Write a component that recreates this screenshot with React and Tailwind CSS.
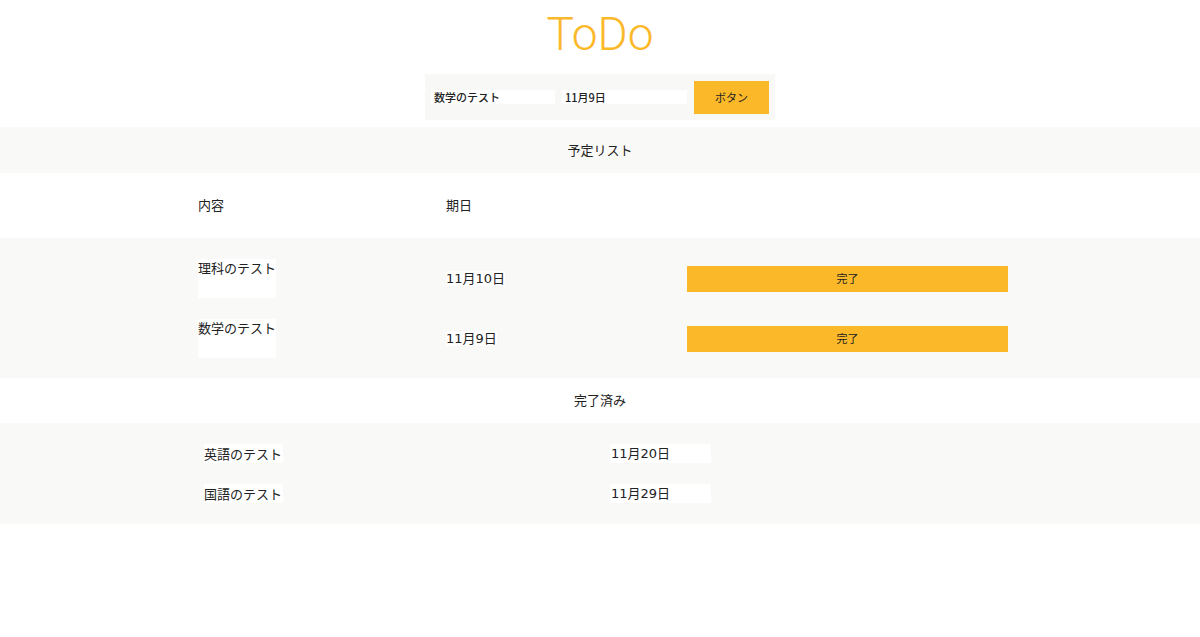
import React, { useState } from "react";

const jp = { fontFamily: '"Noto Sans CJK JP", "Noto Sans", sans-serif' };
// 日付は数字幅が広めのフォントで
const dateFont = { fontFamily: '"DejaVu Sans", "Noto Sans CJK JP", sans-serif' };

const App = () => {
  const [title, setTitle] = useState("数学のテスト");
  const [date, setDate] = useState("11月9日");
  const [todos] = useState([
    { id: 1, title: "理科のテスト", date: "11月10日" },
    { id: 2, title: "数学のテスト", date: "11月9日" },
  ]);
  const [done] = useState([
    { id: 3, title: "英語のテスト", date: "11月20日" },
    { id: 4, title: "国語のテスト", date: "11月29日" },
  ]);

  return (
    <div className="w-[1200px] h-[637px] bg-white text-[#222]" style={jp}>
      <h1
        className="h-[74px] pt-[10px] text-center text-[46px] leading-[48px] font-light text-[#fbb829]"
        style={{ fontFamily: 'Roboto, "Liberation Sans", sans-serif' }}
      >
        ToDo
      </h1>

      {/* 入力フォーム */}
      <div className="flex justify-center">
        <div className="w-[350px] h-[46px] bg-[#f8f8f6] flex items-center pl-[6px] pr-[6px]">
          <input
            value={title}
            onChange={(e) => setTitle(e.target.value)}
            className="w-[124px] h-[14px] bg-white px-[3px] text-[11px] font-medium outline-none"
          />
          <input
            value={date}
            onChange={(e) => setDate(e.target.value)}
            className="ml-[7px] w-[125px] h-[14px] bg-white px-[3px] text-[11px] font-medium outline-none"
          />
          <button
            type="button"
            className="ml-[7px] w-[75px] h-[33px] bg-[#fbb829] text-[11px]"
          >
            ボタン
          </button>
        </div>
      </div>

      {/* 予定リスト */}
      <div className="mt-[7px] h-[46px] bg-[#f9f9f7] flex items-center justify-center text-[13px] pb-[1px]">
        予定リスト
      </div>
      <div className="h-[65px] flex items-center pl-[198px] text-[13px] pb-[1px]">
        <div className="w-[248px]">内容</div>
        <div>期日</div>
      </div>
      <div className="bg-[#f9f9f7] pt-[21px] pb-[20px] pl-[198px] flex flex-col gap-[21px]">
        {todos.map((t) => (
          <div key={t.id} className="flex items-center h-[39px] text-[13px]">
            <div className="w-[78px] h-[39px] bg-white leading-[18px]">
              {t.title}
            </div>
            <div className="ml-[170px] w-[241px]">
              <span className="bg-white" style={dateFont}>
                {t.date}
              </span>
            </div>
            <button
              type="button"
              className="w-[321px] h-[26px] bg-[#fbb829] text-[11px]"
            >
              完了
            </button>
          </div>
        ))}
      </div>

      {/* 完了済み */}
      <div className="h-[45px] flex items-center justify-center text-[13px] pb-[1px]">
        完了済み
      </div>
      <div className="bg-[#f9f9f7] pt-[21px] pb-[21px] pl-[204px] flex flex-col gap-[21px]">
        {done.map((t) => (
          <div key={t.id} className="flex items-center h-[19px] text-[13px]">
            <div className="w-[79px] h-[19px] bg-white leading-[19px]">
              {t.title}
            </div>
            <div
              className="ml-[327px] w-[101px] h-[19px] bg-white leading-[19px] pl-[1px]"
              style={dateFont}
            >
              {t.date}
            </div>
          </div>
        ))}
      </div>
    </div>
  );
};

export default App;
